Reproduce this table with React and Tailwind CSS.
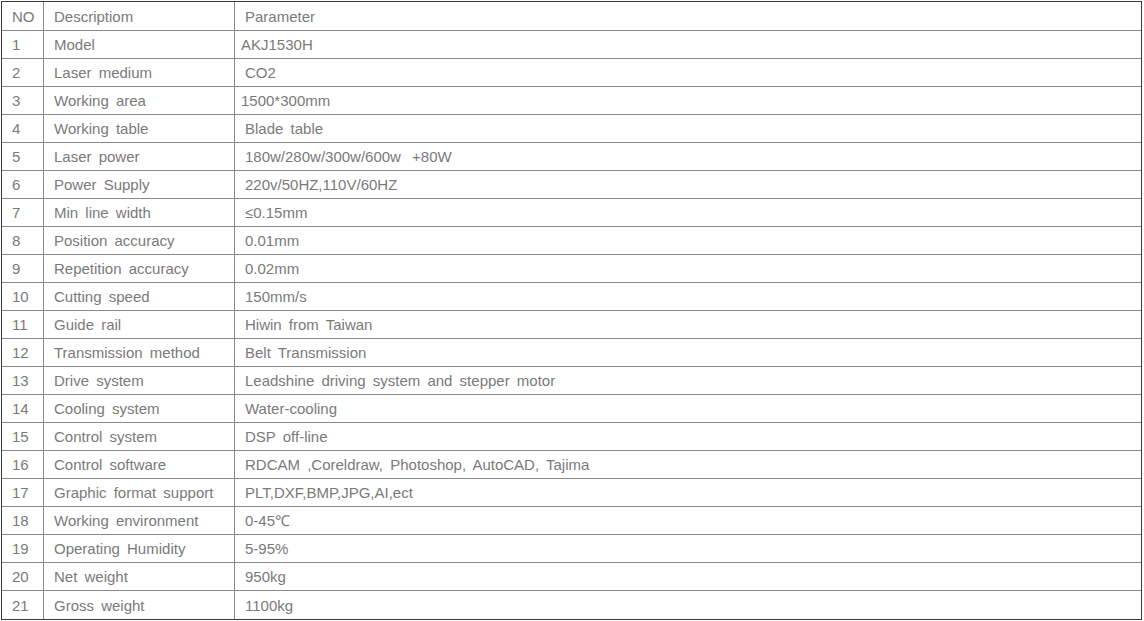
const rows = [
  ["1", "Model", "AKJ1530H", true],
  ["2", "Laser medium", "CO2"],
  ["3", "Working area", "1500*300mm", true],
  ["4", "Working table", "Blade table"],
  ["5", "Laser power", null],
  ["6", "Power Supply", "220v/50HZ,110V/60HZ"],
  ["7", "Min line width", "≤0.15mm"],
  ["8", "Position accuracy", "0.01mm"],
  ["9", "Repetition accuracy", "0.02mm"],
  ["10", "Cutting speed", "150mm/s"],
  ["11", "Guide rail", "Hiwin from Taiwan"],
  ["12", "Transmission method", "Belt Transmission"],
  ["13", "Drive system", "Leadshine driving system and stepper motor"],
  ["14", "Cooling system", "Water-cooling"],
  ["15", "Control system", "DSP off-line"],
  ["16", "Control software", "RDCAM ,Coreldraw, Photoshop, AutoCAD, Tajima"],
  ["17", "Graphic format support", "PLT,DXF,BMP,JPG,AI,ect"],
  ["18", "Working environment", "0-45℃"],
  ["19", "Operating Humidity", "5-95%"],
  ["20", "Net weight", "950kg"],
  ["21", "Gross weight", "1100kg"],
];

export default function App() {
  return (
    <div className="w-[1144px] h-[621px] bg-white pt-px pl-px">
      <div
        className="w-[1141px] border border-[#3a3a3a] text-[15px] text-[#7a7a7a] [word-spacing:3px]"
        style={{ fontFamily: '"Liberation Sans", Arial, sans-serif' }}
      >
        <div className="flex h-[29px] border-b border-[#8a8a8a]">
          <div className="w-[42px] shrink-0 border-r border-[#8a8a8a] pl-[10px] pt-[2px] flex items-center">NO</div>
          <div className="w-[191px] shrink-0 border-r border-[#8a8a8a] pl-[10px] pt-[2px] flex items-center">Descriptiom</div>
          <div className="flex-1 pl-[10px] pt-[2px] flex items-center">Parameter</div>
        </div>
        {rows.map(([no, d, p, tight], i) => (
          <div
            key={no}
            className={
              "flex h-[28px] " + (i < rows.length - 1 ? "border-b border-[#8a8a8a]" : "h-[27px]")
            }
          >
            <div className="w-[42px] shrink-0 border-r border-[#8a8a8a] pl-[10px] pt-[2px] flex items-center">{no}</div>
            <div className="w-[191px] shrink-0 border-r border-[#8a8a8a] pl-[10px] pt-[2px] flex items-center whitespace-nowrap">{d}</div>
            <div className={"flex-1 flex items-center whitespace-nowrap pt-[2px] " + (tight ? "pl-[6px]" : "pl-[10px]")}>
              {p === null ? (
                <span>
                  180w/280w/300w/600w <span className="pl-[4px]">+80W</span>
                </span>
              ) : (
                p
              )}
            </div>
          </div>
        ))}
      </div>
    </div>
  );
}
